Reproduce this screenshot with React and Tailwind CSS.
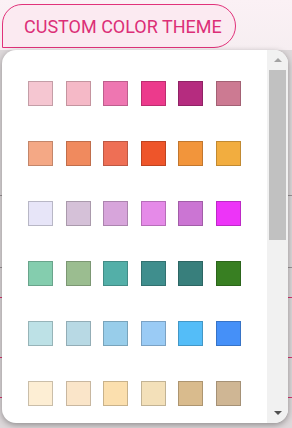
import React from "react";

const rows = [
  ["#f5c6d1", "#f5b9c7", "#ee76b1", "#ec3a8c", "#b52c7f", "#cc7a92"],
  ["#f4a885", "#f08a5e", "#ee6f55", "#ee552a", "#f2953b", "#f2ad3f"],
  ["#e7e5f8", "#d5c1d8", "#d7a5db", "#e58ae8", "#cb75d3", "#ed34f8"],
  ["#84cdae", "#9bbd90", "#53afa8", "#3f8e8d", "#387f7c", "#387f22"],
  ["#bde1e6", "#b8d9e4", "#98cdea", "#9acbf5", "#54bdf8", "#4590f8"],
  ["#fdeed4", "#fae5c9", "#fbdfae", "#f3e0b9", "#d9bb8d", "#cfb694"],
];

export default function App() {
  return (
    <div className="relative w-[292px] h-[428px] overflow-hidden bg-[#fbf1f5] font-['Roboto',sans-serif]">
      <div className="h-[50px] pt-[4px] pl-[2px] bg-gradient-to-b from-[#fbf1f5] to-[#f6eef1]">
        <button className="h-[44px] w-[234px] border border-[#e1327a] bg-[#fbeaf1] rounded-tl-[20px] rounded-r-[22px] text-[#dc2f77] text-[18px] tracking-[0px] text-left pl-[21px]">
          CUSTOM COLOR THEME
        </button>
      </div>
      <div className="h-[378px] bg-[#ddd8da] flex flex-col">
        <div className="h-[146px] border-b border-[#9a9396]" />
        <div className="h-[72px] border-b border-[#9a9396]" />
        <div className="h-[30px] border-b border-[#d9336e]" />
        <div className="h-[60px] border-b border-[#d9336e]" />
        <div className="h-[40px] border-b border-[#d9336e]" />
      </div>

      <div className="absolute left-[2px] top-[50px] w-[286px] h-[373px] bg-white rounded-[14px] shadow-[0_2px_6px_rgba(0,0,0,0.35)] overflow-hidden flex">
        <div className="flex-1 pl-[26px] pt-[31px]">
          <div className="grid grid-cols-[repeat(6,25px)] gap-x-[12.6px] gap-y-[35px]">
            {rows.flat().map((c, i) => (
              <div key={i} className="w-[25px] h-[25px] border border-black/20" style={{ backgroundColor: c }} />
            ))}
          </div>
        </div>
        <div className="w-[21px] bg-[#f1f1f1] flex flex-col items-center">
          <div className="h-[20px] flex items-center justify-center">
            <div className="w-0 h-0 border-l-[4px] border-r-[4px] border-b-[4px] border-l-transparent border-r-transparent border-b-[#a3a3a3]" />
          </div>
          <div className="w-[17px] h-[170px] bg-[#c1c1c1]" />
          <div className="flex-1" />
          <div className="h-[20px] flex items-center justify-center">
            <div className="w-0 h-0 border-l-[4px] border-r-[4px] border-t-[4px] border-l-transparent border-r-transparent border-t-[#505050]" />
          </div>
        </div>
      </div>
    </div>
  );
}
